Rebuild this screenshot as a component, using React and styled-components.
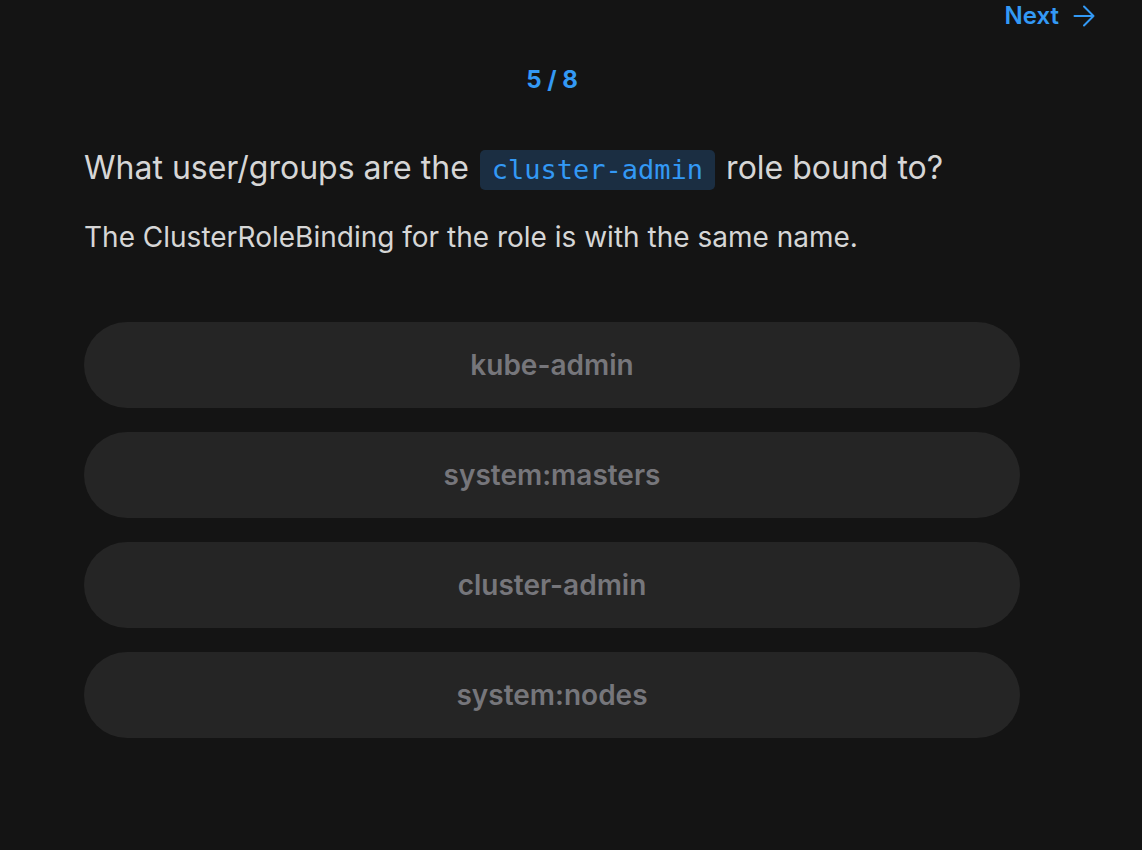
import React from 'react';
import styled, {createGlobalStyle} from 'styled-components';

const options = ['kube-admin', 'system:masters', 'cluster-admin', 'system:nodes'];

const Arrow = () => (
    <svg width="22" height="22" viewBox="0 0 22 22" fill="none" stroke="currentColor" strokeWidth="2" strokeLinecap="round" strokeLinejoin="round">
        <path d="M1.5 11h19M11 1.5l9.5 9.5-9.5 9.5" />
    </svg>
)

const App = () => {
    return (
        <>
            <GlobalStyle />
            <Page>
                <TopBar>
                    <NextButton>
                        Next <Arrow />
                    </NextButton>
                </TopBar>
                <Content>
                    <Counter>5 / 8</Counter>
                    <Question>
                        What user/groups are the <Code>cluster-admin</Code> role bound to?
                    </Question>
                    <Hint>The ClusterRoleBinding for the role is with the same name.</Hint>
                    <Options>
                        {options.map((o) => (
                            <Option key={o}>{o}</Option>
                        ))}
                    </Options>
                </Content>
            </Page>
        </>
    )
}

//Styles
const GlobalStyle = createGlobalStyle`
    body {
        margin: 0;
        background-color: #141414;
        font-family: Inter, "Noto Sans", sans-serif;
    }
`
const Page = styled.main`
    min-height: 850px;
    padding: 0 122px 0 84px;
`
const TopBar = styled.header`
    display: flex;
    justify-content: flex-end;
    padding-top: 1px;
    margin-right: -75px;
`
const NextButton = styled.button`
    display: flex;
    align-items: center;
    gap: 14px;
    background: none;
    border: none;
    padding: 0;
    font-family: inherit;
    font-size: 24px;
    font-weight: 600;
    color: #3399f5;
    cursor: pointer;
`
const Content = styled.section`
    display: flex;
    flex-direction: column;
`
const Counter = styled.div`
    margin-top: 35px;
    text-align: center;
    font-size: 24px;
    font-weight: 700;
    color: #3399f5;
`
const Question = styled.h2`
    margin: 54px 0 0;
    font-size: 32px;
    font-weight: 400;
    line-height: 40px;
    color: #d6d6d6;
`
const Code = styled.code`
    display: inline-block;
    padding: 0 12px;
    margin: 0 2px;
    border-radius: 5px;
    background-color: #1b2e42;
    color: #3399f5;
    font-family: "DejaVu Sans Mono", monospace;
    font-size: 27px;
    line-height: 40px;
`
const Hint = styled.p`
    margin: 30px 0 0;
    font-size: 28px;
    color: #d6d6d6;
`
const Options = styled.div`
    display: flex;
    flex-direction: column;
    gap: 24px;
    margin-top: 68px;
`
const Option = styled.button`
    height: 86px;
    border: none;
    border-radius: 43px;
    background-color: #252525;
    color: #76767b;
    font-family: inherit;
    font-size: 28px;
    font-weight: 600;
    cursor: pointer;
`
export default App
